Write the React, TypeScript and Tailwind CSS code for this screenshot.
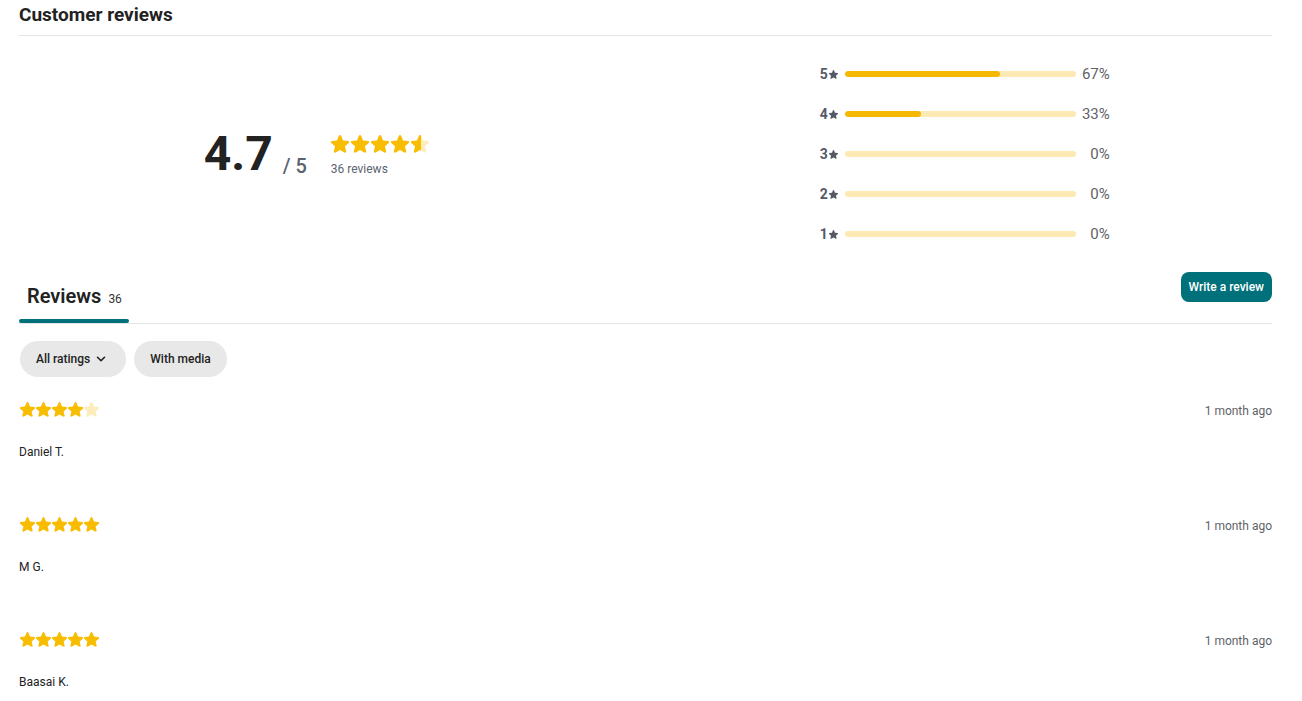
import { ChevronDown } from 'lucide-react';

const STAR =
  'M10.788 3.21c.448-1.077 1.976-1.077 2.424 0l2.082 5.006 5.404.434c1.164.093 1.636 1.545.749 2.305l-4.117 3.527 1.257 5.273c.271 1.136-.964 2.033-1.96 1.425L12 18.354 7.373 21.18c-.996.608-2.231-.29-1.96-1.425l1.257-5.273-4.117-3.527c-.887-.76-.415-2.212.749-2.305l5.404-.434 2.082-5.005Z';

function Star({ fill = 1, className }: { fill?: number; className: string }) {
  const id = `half-${Math.round(fill * 100)}`;
  return (
    <svg viewBox="2.3 2.4 19.4 19.2" className={className}>
      <defs>
        <linearGradient id={id} x1="0" x2="1" y1="0" y2="0">
          <stop offset={fill} stopColor="#f8bd00" />
          <stop offset={fill} stopColor="#fdedbd" />
        </linearGradient>
      </defs>
      <path d={STAR} fill={`url(#${id})`} />
    </svg>
  );
}

function Stars({ value, size }: { value: number; size: 'lg' | 'sm' }) {
  return (
    <div className={size === 'lg' ? 'flex gap-[2px]' : 'flex gap-[1px]'}>
      {[0, 1, 2, 3, 4].map((i) => (
        <Star
          key={i}
          fill={Math.max(0, Math.min(1, value - i))}
          className={size === 'lg' ? 'w-[18px] h-[18px]' : 'w-[15px] h-[15px]'}
        />
      ))}
    </div>
  );
}

const dist = [
  { n: 5, pct: 67 },
  { n: 4, pct: 33 },
  { n: 3, pct: 0 },
  { n: 2, pct: 0 },
  { n: 1, pct: 0 },
];

const reviews = [
  { name: 'Daniel T.', rating: 4, when: '1 month ago' },
  { name: 'M G.', rating: 5, when: '1 month ago' },
  { name: 'Baasai K.', rating: 5, when: '1 month ago' },
];

export default function App() {
  return (
    <div className="bg-white min-h-screen pl-[19px] pr-[30px] font-['Roboto',sans-serif] text-[#222]">
      <div className="h-[36px] pt-[1px] border-b border-[#e6e6e6]">
        <h2 className="text-[19px] leading-7 font-bold">Customer reviews</h2>
      </div>

      <div className="grid grid-cols-2 py-[18px]">
        <div className="flex items-center justify-center pr-8">
          <div className="flex items-end">
            <span className="text-[48px] leading-none font-bold text-[#222]">4.7</span>
            <span className="ml-[10px] mb-[2px] text-[20px] leading-none font-medium text-[#5b6370]">/ 5</span>
          </div>
          <div className="ml-[24px] flex flex-col gap-[8px] mt-[4px]">
            {/* last star shows roughly half filled */}
            <Stars value={4.55} size="lg" />
            <span className="text-xs leading-4 text-[#5b6370]">36 reviews</span>
          </div>
        </div>

        <div className="flex flex-col items-center pl-3">
          {dist.map((d) => (
            <div key={d.n} className="h-10 flex items-center">
              <div className="w-[18px] flex items-center text-sm font-bold text-[#555b66]">
                {d.n}
                <svg viewBox="2.3 2.4 19.4 19.2" className="w-[9px] h-[9px] ml-[1px]">
                  <path d={STAR} fill="#555b66" />
                </svg>
              </div>
              <div className="ml-[7px] w-[231px] h-[6px] rounded-full bg-[#fde9b4] overflow-hidden">
                <div className="h-full rounded-full bg-[#f5b800]" style={{ width: `${d.pct}%` }} />
              </div>
              <div className="w-[34px] text-right text-[15px] text-[#5f6368]">{d.pct}%</div>
            </div>
          ))}
        </div>
      </div>

      <div className="flex justify-between items-start border-b border-[#e6e6e6]">
        <div className="w-[110px] pt-[10px]">
          <div className="pl-2 flex items-baseline">
            <span className="text-[20px] leading-7 font-semibold">Reviews</span>
            <span className="ml-[7px] text-xs text-[#333]">36</span>
          </div>
          <div className="mt-[9px] h-[4px] rounded-full bg-[#00707a]" />
        </div>
        <button className="h-[30px] px-2 rounded-lg bg-[#00707a] text-white text-xs font-medium">
          Write a review
        </button>
      </div>

      <div className="flex gap-2 mt-[17px] pl-[1px]">
        <button className="h-9 pl-4 pr-[18px] rounded-full bg-[#e8e8e8] text-xs font-medium text-[#222] flex items-center gap-[4px]">
          All ratings
          <ChevronDown size={14} strokeWidth={2.75} />
        </button>
        <button className="h-9 px-4 rounded-full bg-[#e8e8e8] text-xs font-medium text-[#222]">With media</button>
      </div>

      <div className="mt-[24px]">
        {reviews.map((r, i) => (
          <div key={i} className="pb-[56px]">
            <div className="flex justify-between items-center h-4">
              <div className="pl-[1px]">
                <Stars value={r.rating} size="sm" />
              </div>
              <span className="text-xs leading-4 text-[#5f6368] mt-[4px]">{r.when}</span>
            </div>
            <div className="mt-[27px] text-xs leading-4 text-[#222]">{r.name}</div>
          </div>
        ))}
      </div>
    </div>
  );
}
